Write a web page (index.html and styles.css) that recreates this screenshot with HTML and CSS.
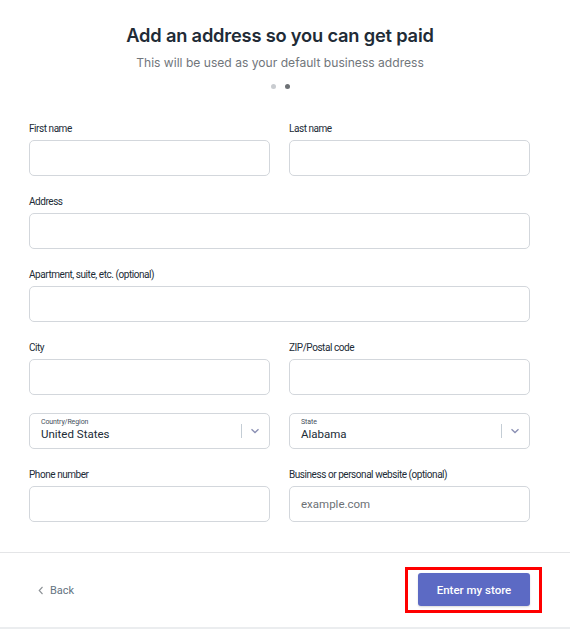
FILE: index.html
```html
<!DOCTYPE html>
<html>
<head>
<meta charset="utf-8">
<link rel="stylesheet" href="styles.css">
</head>
<body>
<div class="page">
  <header class="head">
    <h1 class="title">Add an address so you can get paid</h1>
    <p class="subtitle">This will be used as your default business address</p>
    <div class="dots"><span class="dot"></span><span class="dot active"></span></div>
  </header>
  <form class="form">
    <div class="field"><label class="label">First name</label><div class="input"></div></div>
    <div class="field"><label class="label">Last name</label><div class="input"></div></div>
    <div class="field wide"><label class="label">Address</label><div class="input"></div></div>
    <div class="field wide"><label class="label">Apartment, suite, etc. (optional)</label><div class="input"></div></div>
    <div class="field"><label class="label">City</label><div class="input"></div></div>
    <div class="field"><label class="label">ZIP/Postal code</label><div class="input"></div></div>
    <div class="field">
      <div class="select">
        <div class="select-text"><span class="mini">Country/Region</span><span class="value">United States</span></div>
        <span class="sep"></span>
        <svg class="chev" width="10" height="6" viewBox="0 0 10 6"><path d="M1.5 1.2 L5 4.5 L8.5 1.2" fill="none" stroke="#8a8fb3" stroke-width="1.3"/></svg>
      </div>
    </div>
    <div class="field">
      <div class="select">
        <div class="select-text"><span class="mini">State</span><span class="value">Alabama</span></div>
        <span class="sep"></span>
        <svg class="chev" width="10" height="6" viewBox="0 0 10 6"><path d="M1.5 1.2 L5 4.5 L8.5 1.2" fill="none" stroke="#8a8fb3" stroke-width="1.3"/></svg>
      </div>
    </div>
    <div class="field"><label class="label">Phone number</label><div class="input"></div></div>
    <div class="field"><label class="label">Business or personal website (optional)</label><div class="input"><span class="ph">example.com</span></div></div>
  </form>
</div>
<footer class="footer">
  <div class="footer-inner">
    <a class="back"><svg width="6" height="9" viewBox="0 0 6 9"><path d="M4.5 1 L1.2 4.5 L4.5 8" fill="none" stroke="#8c9196" stroke-width="1.1"/></svg><span>Back</span></a>
    <span class="highlight"><button class="btn" type="button">Enter my store</button></span>
  </div>
</footer>
<div class="bottom-bar"></div>
</body>
</html>
```
FILE: styles.css
```css
* { box-sizing: border-box; }
html, body { margin: 0; padding: 0; background: #fff; }
body { font-family: Roboto, "Liberation Sans", sans-serif; color: #212b36; width: 570px; }
.page { width: 560px; }
.head { text-align: center; padding-top: 22px; }
.title { margin: 0; font-family: Inter, "Liberation Sans", sans-serif; font-weight: 600; font-size: 18.3px; line-height: 26px; color: #212b36; letter-spacing: -0.2px; }
.subtitle { margin: 7px 0 0; font-family: Inter, "Liberation Sans", sans-serif; font-size: 12.1px; line-height: 16px; color: #71767b; }
.dots { display: flex; justify-content: center; gap: 9px; margin-top: 13px; height: 5px; }
.dot { width: 5px; height: 5px; border-radius: 50%; background: #c9ccd0; }
.dot.active { background: #6d7175; }
.form { display: grid; grid-template-columns: 241px 241px; column-gap: 19px; row-gap: 18px; padding: 0 30px 0 29px; margin-top: 32px; }
.field { display: flex; flex-direction: column; }
.field.wide { grid-column: 1 / -1; }
.label { font-size: 10px; line-height: 14px; height: 14px; color: #212b36; letter-spacing: -0.45px; margin-bottom: 5px; padding-top: 1px; }
.input { height: 36px; border: 1px solid #d3d7dc; border-radius: 5px; display: flex; align-items: center; padding: 0 11px; }
.ph { font-size: 11.5px; color: #6d7175; }
.select { height: 36px; border: 1px solid #d3d7dc; border-radius: 5px; display: flex; align-items: center; padding-left: 11px; }
.select-text { flex: 1; display: flex; flex-direction: column; padding-top: 4px; align-self: flex-start; }
.mini { font-size: 7px; line-height: 9px; color: #454f5b; letter-spacing: -0.1px; }
.value { font-size: 11.5px; line-height: 14px; color: #212b36; }
.sep { width: 1px; height: 14px; background: #c4cdd5; }
.chev { margin: 0 9px 0 8px; }
.footer { border-top: 1px solid #e4e5e7; margin-top: 30px; }
.footer-inner { width: 560px; height: 74px; display: flex; align-items: center; justify-content: space-between; padding: 0 18px 0 38px; }
.back { display: flex; align-items: center; gap: 6px; font-size: 11px; color: #637381; }
.highlight { border: 3px solid #ff0000; padding: 3px 9px 4px 10px; display: flex; }
.btn { width: 112px; height: 33px; border: 0; border-radius: 3px; background: #5c6ac4; color: #fff; font-family: Roboto, "Liberation Sans", sans-serif; font-weight: 500; font-size: 11.5px; letter-spacing: 0; box-shadow: 0 1px 2px rgba(0,0,0,0.15); padding: 0; }
.bottom-bar { height: 2px; background: #ebedef; }
```
